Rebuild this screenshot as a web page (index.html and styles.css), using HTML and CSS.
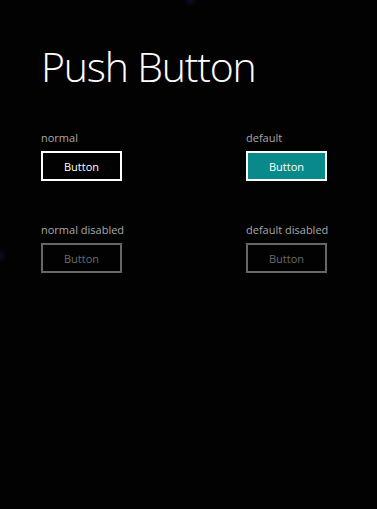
FILE: index.html
```html
<!DOCTYPE html>
<html lang="en">
<head>
  <meta charset="UTF-8" />
  <title>Push Button</title>
  <link rel="stylesheet" href="styles.css">
</head>
<body>
  <div class="page">
    <h1>Push Button</h1>
    <div class="grid">
      <div class="cell">
        <div class="label">normal</div>
        <button class="btn">Button</button>
      </div>
      <div class="cell">
        <div class="label">default</div>
        <button class="btn default">Button</button>
      </div>
      <div class="cell">
        <div class="label">normal disabled</div>
        <button class="btn" disabled>Button</button>
      </div>
      <div class="cell">
        <div class="label">default disabled</div>
        <button class="btn" disabled>Button</button>
      </div>
    </div>
  </div>
</body>
</html>
```

FILE: styles.css
```css
html, body {
  height: 100%;
}
body {
  margin: 0;
  background:
    radial-gradient(circle at 190px 0, rgba(60,50,200,0.2), transparent 7px),
    radial-gradient(circle at 0 255px, rgba(60,50,200,0.2), transparent 7px),
    #020203;
  color: #fff;
  font-family: 'Open Sans', 'Segoe UI', sans-serif;
}
.page {
  padding: 38px 0 0 41px;
}
h1 {
  margin: 0;
  font-weight: 300;
  font-size: 41px;
  line-height: 56px;
  letter-spacing: -1.2px;
  color: #fff;
}
.grid {
  display: grid;
  grid-template-columns: 205px 120px;
  row-gap: 42px;
  margin-top: 37px;
}
.label {
  font-size: 11px;
  line-height: 14px;
  color: #a8a8a8;
  margin-bottom: 6px;
}
.btn {
  display: block;
  width: 81px;
  height: 30px;
  padding: 0;
  background: transparent;
  border: 2px solid #fff;
  color: #fff;
  font-family: 'Open Sans', 'Segoe UI', sans-serif;
  font-size: 11px;
}
.btn.default {
  background: #088a8a;
}
.btn:disabled {
  border-color: #666;
  color: #6a6a6a;
}
```
